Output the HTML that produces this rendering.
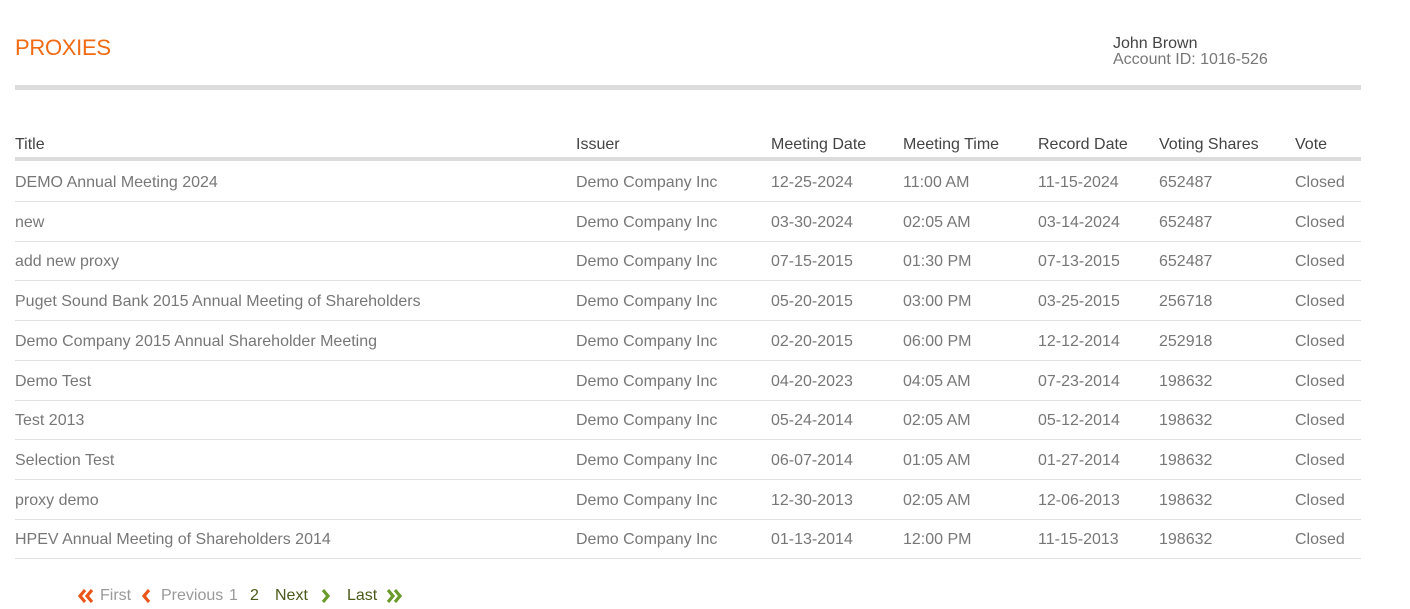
<!DOCTYPE html>
<html><head><meta charset="utf-8"><style>
body{margin:0;background:#fff;font-family:"Liberation Sans",sans-serif;width:1410px;height:607px;overflow:hidden;position:relative}
.h1{position:absolute;left:15px;top:35px;font-size:22px;color:#f06a13;letter-spacing:-0.3px}
.user{position:absolute;left:1113px;top:36px;font-size:16px;line-height:16px;color:#444}
.user div+div{color:#777}
.bar{position:absolute;left:15px;top:85px;width:1346px;height:5px;background:#dcdcdc}
.hdr,.row{position:absolute;left:15px;width:1346px;font-size:16px}
.hdr{top:133px;height:24px;border-bottom:4px solid #dcdcdc;color:#444}
.row{height:39px;border-bottom:1px solid #e2e2e2;color:#777}
.hdr span,.row span{position:absolute;top:3px;white-space:nowrap}
.row span{top:12px}
.pg{position:absolute;top:587px;left:77px;font-size:16px;white-space:nowrap}
.pg span{position:absolute;top:0}
</style></head><body>
<div class="h1">PROXIES</div>
<div class="user"><div>John Brown</div><div>Account ID: 1016-526</div></div>
<div class="bar"></div>
<div class="hdr"><span style="left:0">Title</span><span style="left:561px">Issuer</span><span style="left:756px">Meeting Date</span><span style="left:888px">Meeting Time</span><span style="left:1023px">Record Date</span><span style="left:1144px">Voting Shares</span><span style="left:1280px">Vote</span></div>
<div id="rows"></div>
<script>
var d=[["DEMO Annual Meeting 2024","12-25-2024","11:00 AM","11-15-2024","652487"],["new","03-30-2024","02:05 AM","03-14-2024","652487"],["add new proxy","07-15-2015","01:30 PM","07-13-2015","652487"],["Puget Sound Bank 2015 Annual Meeting of Shareholders","05-20-2015","03:00 PM","03-25-2015","256718"],["Demo Company 2015 Annual Shareholder Meeting","02-20-2015","06:00 PM","12-12-2014","252918"],["Demo Test","04-20-2023","04:05 AM","07-23-2014","198632"],["Test 2013","05-24-2014","02:05 AM","05-12-2014","198632"],["Selection Test","06-07-2014","01:05 AM","01-27-2014","198632"],["proxy demo","12-30-2013","02:05 AM","12-06-2013","198632"],["HPEV Annual Meeting of Shareholders 2014","01-13-2014","12:00 PM","11-15-2013","198632"]];
var h="";d.forEach(function(r,i){var t=162+i*39.7;h+='<div class="row" style="top:'+t+'px"><span style="left:0">'+r[0]+'</span><span style="left:561px">Demo Company Inc</span><span style="left:756px">'+r[1]+'</span><span style="left:888px">'+r[2]+'</span><span style="left:1023px">'+r[3]+'</span><span style="left:1144px">'+r[4]+'</span><span style="left:1280px">Closed</span></div>'});
document.getElementById("rows").innerHTML=h;
</script>
<div class="pg">
<span style="left:0;top:1px"><svg width="18" height="16" viewBox="0 0 18 16"><path d="M8 2L3 8l5 6M15 2L10 8l5 6" fill="none" stroke="#e8561a" stroke-width="3.2"/></svg></span>
<span style="left:23px;color:#999">First</span>
<span style="left:63px;top:1px"><svg width="12" height="16" viewBox="0 0 12 16"><path d="M9 2L4 8l5 6" fill="none" stroke="#e8561a" stroke-width="3.2"/></svg></span>
<span style="left:84px;color:#999">Previous</span>
<span style="left:152px;color:#999">1</span>
<span style="left:173px;color:#4a5a1a">2</span>
<span style="left:198px;color:#4a5a1a">Next</span>
<span style="left:243px;top:1px"><svg width="12" height="16" viewBox="0 0 12 16"><path d="M3 2l5 6-5 6" fill="none" stroke="#6a9a2a" stroke-width="3.2"/></svg></span>
<span style="left:270px;color:#4a5a1a">Last</span>
<span style="left:308px;top:1px"><svg width="18" height="16" viewBox="0 0 18 16"><path d="M3 2l5 6-5 6M10 2l5 6-5 6" fill="none" stroke="#6a9a2a" stroke-width="3.2"/></svg></span>
</div>
</body></html>
